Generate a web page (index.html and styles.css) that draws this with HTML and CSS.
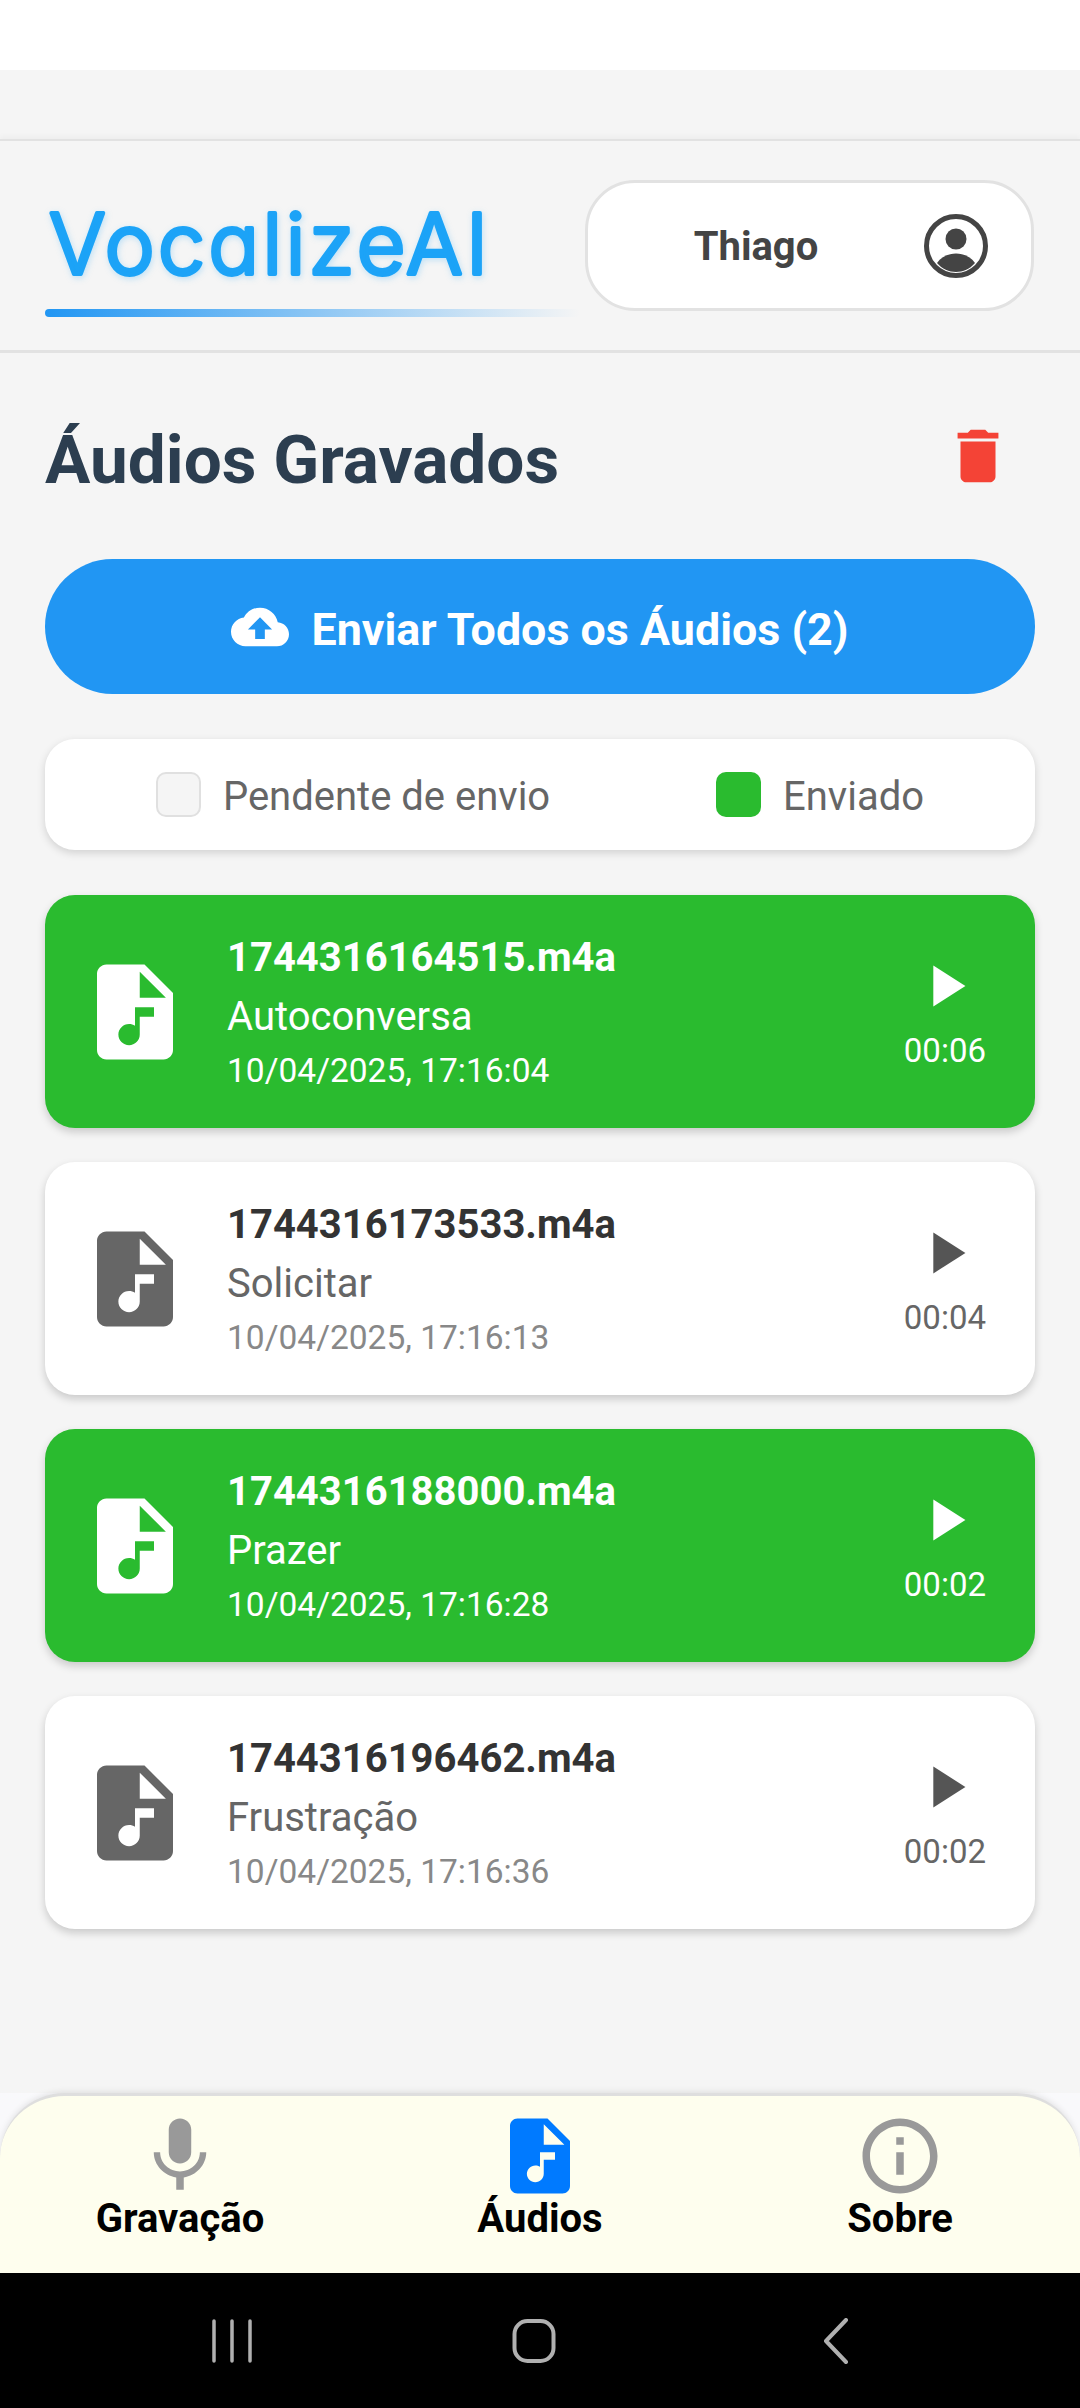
FILE: index.html
```html
<!DOCTYPE html>
<html lang="pt">
<head>
    <meta charset="UTF-8">
    <meta name="viewport" content="width=device-width, initial-scale=1.0">
    <title>VocalizeAI - Áudios Gravados</title>
    <link rel="stylesheet" href="styles.css">
</head>
<body>
    <svg class="defs" width="0" height="0">
        <symbol id="audioFile" viewBox="0 0 24 24">
            <path fill-rule="evenodd" d="M14 2H6C4.9 2 4 2.9 4 4v16c0 1.1.9 2 2 2h12c1.1 0 2-.9 2-2V8L14 2zM16 13h-3v3.75c0 1.24-1.01 2.25-2.25 2.25S8.5 17.99 8.5 16.75c0-1.24 1.01-2.25 2.25-2.25.46 0 .89.14 1.25.38V11h4V13zM13 9V3.5L18.5 9H13z"/>
        </symbol>
        <symbol id="play" viewBox="0 0 24 24">
            <path d="M8 5v14l11-7z"/>
        </symbol>
    </svg>

    <div class="status-bar"></div>

    <header class="topo">
        <div class="marca">
            <svg class="logo" width="535" height="110"><text x="4" y="94">VocalizeAI</text></svg>
            <div class="logo-linha"></div>
        </div>
        <div class="usuario">
            <span class="usuario-nome">Thiago</span>
            <svg class="usuario-icone" viewBox="0 0 64 64">
                <circle cx="32" cy="32" r="29.5" fill="none" stroke="#444" stroke-width="5"/>
                <circle cx="32" cy="25" r="10.5" fill="#444"/>
                <path fill="#444" d="M13 49c4-6 11-9.500 19-9.500s15 3.500 19 9.500c-5 6-12 9-19 9s-14-3-19-9z"/>
            </svg>
        </div>
    </header>

    <main class="conteudo">
        <div class="titulo-linha">
            <h1 class="titulo">Áudios Gravados</h1>
            <svg class="lixeira" viewBox="0 0 24 24"><path d="M6 19c0 1.100.9 2 2 2h8c1.100 0 2-.9 2-2V7H6v12zM19 4h-3.500l-1-1h-5l-1 1H5v2h14V4z"/></svg>
        </div>

        <button class="enviar-todos">
            <svg class="enviar-icone" viewBox="0 0 24 24"><path fill-rule="evenodd" d="M19.350 10.040C18.670 6.590 15.640 4 12 4 9.110 4 6.600 5.640 5.350 8.040 2.340 8.360 0 10.910 0 14c0 3.310 2.690 6 6 6h13c2.760 0 5-2.240 5-5 0-2.640-2.050-4.780-4.650-4.960zM14 13v4h-4v-4H7l5-5 5 5h-3z"/></svg>
            <span class="enviar-texto">Enviar Todos os Áudios (2)</span>
        </button>

        <div class="legenda">
            <div class="legenda-item"><span class="caixa caixa-pendente"></span><span class="legenda-texto">Pendente de envio</span></div>
            <div class="legenda-item"><span class="caixa caixa-enviado"></span><span class="legenda-texto">Enviado</span></div>
        </div>

        <div class="lista">
            <div class="card card-enviado">
                <svg class="card-icone"><use href="#audioFile"/></svg>
                <div class="card-info">
                    <div class="card-nome">1744316164515.m4a</div>
                    <div class="card-tipo">Autoconversa</div>
                    <div class="card-data">10/04/2025, 17:16:04</div>
                </div>
                <div class="card-acao">
                    <svg class="card-play"><use href="#play"/></svg>
                    <span class="card-tempo">00:06</span>
                </div>
            </div>
            <div class="card">
                <svg class="card-icone"><use href="#audioFile"/></svg>
                <div class="card-info">
                    <div class="card-nome">1744316173533.m4a</div>
                    <div class="card-tipo">Solicitar</div>
                    <div class="card-data">10/04/2025, 17:16:13</div>
                </div>
                <div class="card-acao">
                    <svg class="card-play"><use href="#play"/></svg>
                    <span class="card-tempo">00:04</span>
                </div>
            </div>
            <div class="card card-enviado">
                <svg class="card-icone"><use href="#audioFile"/></svg>
                <div class="card-info">
                    <div class="card-nome">1744316188000.m4a</div>
                    <div class="card-tipo">Prazer</div>
                    <div class="card-data">10/04/2025, 17:16:28</div>
                </div>
                <div class="card-acao">
                    <svg class="card-play"><use href="#play"/></svg>
                    <span class="card-tempo">00:02</span>
                </div>
            </div>
            <div class="card">
                <svg class="card-icone"><use href="#audioFile"/></svg>
                <div class="card-info">
                    <div class="card-nome">1744316196462.m4a</div>
                    <div class="card-tipo">Frustração</div>
                    <div class="card-data">10/04/2025, 17:16:36</div>
                </div>
                <div class="card-acao">
                    <svg class="card-play"><use href="#play"/></svg>
                    <span class="card-tempo">00:02</span>
                </div>
            </div>
        </div>
    </main>

    <div class="abas-fundo">
        <nav class="abas">
            <div class="aba">
                <svg class="aba-icone" viewBox="0 0 24 24"><path d="M12 14c1.660 0 2.990-1.340 2.990-3L15 5c0-1.660-1.340-3-3-3S9 3.340 9 5v6c0 1.660 1.340 3 3 3zm5.300-3c0 3-2.540 5.100-5.300 5.100S6.700 14 6.700 11H5c0 3.410 2.720 6.230 6 6.720V21h2v-3.280c3.280-.48 6-3.300 6-6.720h-1.700z"/></svg>
                <span class="aba-texto">Gravação</span>
            </div>
            <div class="aba aba-ativa">
                <svg class="aba-icone"><use href="#audioFile"/></svg>
                <span class="aba-texto">Áudios</span>
            </div>
            <div class="aba">
                <svg class="aba-icone" viewBox="0 0 24 24"><path d="M11 7h2v2h-2zm0 4h2v6h-2zm1-9C6.480 2 2 6.480 2 12s4.480 10 10 10 10-4.480 10-10S17.520 2 12 2zm0 18c-4.410 0-8-3.590-8-8s3.590-8 8-8 8 3.590 8 8-3.590 8-8 8z"/></svg>
                <span class="aba-texto">Sobre</span>
            </div>
        </nav>
    </div>

    <div class="sistema">
        <svg class="sis-icone" viewBox="0 0 44 46">
            <path d="M4 3v40M22 3v40M40 3v40" stroke-width="3.500"/>
        </svg>
        <svg class="sis-icone" viewBox="0 0 44 46">
            <rect x="2.500" y="3" width="39" height="40" rx="13" stroke-width="4"/>
        </svg>
        <svg class="sis-icone" viewBox="0 0 44 46">
            <path d="M32 2L12 23l20 21" stroke-width="4"/>
        </svg>
    </div>
</body>
</html>
```

FILE: styles.css
```css
* {
    box-sizing: border-box;
}
html, body {
    margin: 0;
    height: 2408px;
}
body {
    display: flex;
    flex-direction: column;
    overflow: hidden;
    background-color: #f5f5f5;
    font-family: Roboto, "Liberation Sans", sans-serif;
}
.defs {
    position: absolute;
}
.status-bar {
    height: 70px;
    background-color: #fff;
}

/* topo */
.topo {
    display: flex;
    justify-content: space-between;
    height: 214px;
    margin-top: 69px;
    padding: 39px 46px 0 45px;
    border-top: 2px solid #e2e2e2;
    border-bottom: 3px solid #e2e2e2;
    box-shadow: 0 -3px 5px rgba(0, 0, 0, 0.03);
}
.marca {
    display: flex;
    flex-direction: column;
}
.logo {
    overflow: visible;
    font-family: Inter, Roboto, sans-serif;
    font-feature-settings: "cv11" 1;
    font-size: 84px;
    font-weight: 300;
    letter-spacing: 3.5px;
    fill: #1ca3f7;
    stroke: #1ca3f7;
    stroke-width: 4px;
    stroke-linejoin: round;
    filter: drop-shadow(1px 2px 3px rgba(28, 163, 247, 0.25));
}
.logo-linha {
    width: 535px;
    height: 8px;
    margin-top: 19px;
    border-radius: 4px;
    background: linear-gradient(to right, #2196f3, rgba(33, 150, 243, 0));
}
.usuario {
    display: flex;
    align-items: center;
    width: 449px;
    height: 131px;
    padding-right: 43px;
    border: 3px solid #e2e2e2;
    border-radius: 50px;
    background-color: #fff;
}
.usuario-nome {
    flex: 1;
    padding-top: 2px;
    text-align: center;
    font-size: 40px;
    font-weight: 700;
    color: #444;
}
.usuario-icone {
    width: 64px;
    height: 64px;
}

/* conteudo */
.conteudo {
    flex: 1;
    padding: 0 45px;
}
.titulo-linha {
    display: flex;
    justify-content: space-between;
    align-items: center;
    height: 206px;
}
.titulo {
    margin: 6px 0 0;
    font-size: 67.5px;
    font-weight: 700;
    color: #2c3e50;
}
.lixeira {
    width: 70px;
    height: 70px;
    margin-right: 22px;
    fill: #f44336;
}
.enviar-todos {
    display: flex;
    justify-content: center;
    align-items: center;
    gap: 22px;
    width: 100%;
    height: 135px;
    border: none;
    border-radius: 68px;
    background-color: #2196f3;
    font-family: inherit;
    font-size: 44.8px;
    font-weight: 700;
    color: #fff;
}
.enviar-icone {
    width: 58px;
    height: 58px;
    fill: #fff;
}
.enviar-texto {
    padding-top: 5px;
}
.legenda {
    display: flex;
    justify-content: space-around;
    align-items: center;
    height: 111px;
    margin-top: 45px;
    padding: 0 28px;
    border-radius: 30px;
    background-color: #fff;
    box-shadow: 0 3px 8px rgba(0, 0, 0, 0.15);
}
.legenda-item {
    display: flex;
    align-items: center;
    gap: 22px;
    font-size: 40px;
    color: #666;
}
.legenda-texto {
    padding-top: 4px;
}
.caixa {
    width: 45px;
    height: 45px;
    border-radius: 10px;
}
.caixa-pendente {
    border: 2px solid #e0e0e0;
    background-color: #f5f5f5;
}
.caixa-enviado {
    background-color: #2abb2f;
}

/* lista de audios */
.lista {
    display: flex;
    flex-direction: column;
    gap: 34px;
    margin-top: 45px;
}
.card {
    display: flex;
    align-items: center;
    height: 233px;
    padding: 0 49px 0 33px;
    border-radius: 30px;
    background-color: #fff;
    box-shadow: 0 4px 8px rgba(0, 0, 0, 0.18);
}
.card-icone {
    flex: none;
    width: 114px;
    height: 114px;
    fill: #666;
}
.card-info {
    flex: 1;
    margin-left: 35px;
}
.card-nome {
    font-size: 40px;
    font-weight: 700;
    line-height: 60px;
    color: #333;
}
.card-tipo {
    font-size: 40px;
    line-height: 58px;
    color: #666;
}
.card-data {
    font-size: 33.5px;
    line-height: 50px;
    color: #888;
}
.card-acao {
    display: flex;
    flex-direction: column;
    align-items: center;
    padding-bottom: 2px;
}
.card-play {
    width: 70px;
    height: 70px;
    fill: #555;
}
.card-tempo {
    margin-top: 10px;
    font-size: 33px;
    line-height: 40px;
    color: #666;
}
.card-enviado {
    background-color: #2abb2f;
}
.card-enviado .card-nome,
.card-enviado .card-tipo,
.card-enviado .card-data,
.card-enviado .card-tempo {
    color: #fff;
}
.card-enviado .card-icone,
.card-enviado .card-play {
    fill: #fff;
}

/* abas */
.abas-fundo {
    height: 180px;
    background-color: #f9f9fb;
}
.abas {
    display: flex;
    height: 180px;
    padding-top: 15px;
    border-top: 3px solid #dedede;
    border-radius: 65px 65px 0 0;
    background-color: #fefeee;
    box-shadow: 0 -1px 6px rgba(0, 0, 0, 0.1);
}
.aba {
    flex: 1;
    display: flex;
    flex-direction: column;
    align-items: center;
}
.aba-icone {
    width: 90px;
    height: 90px;
    fill: #999;
}
.aba-ativa .aba-icone {
    fill: #007aff;
}
.aba-texto {
    margin-top: -6px;
    font-size: 40px;
    font-weight: 700;
    color: #000;
}

/* barra do sistema */
.sistema {
    display: flex;
    justify-content: center;
    align-items: center;
    gap: 258px;
    height: 135px;
    padding-right: 12px;
    background-color: #000;
}
.sis-icone {
    width: 44px;
    height: 46px;
    fill: none;
    stroke: #b0b0b0;
    stroke-linecap: round;
    stroke-linejoin: round;
}
```
